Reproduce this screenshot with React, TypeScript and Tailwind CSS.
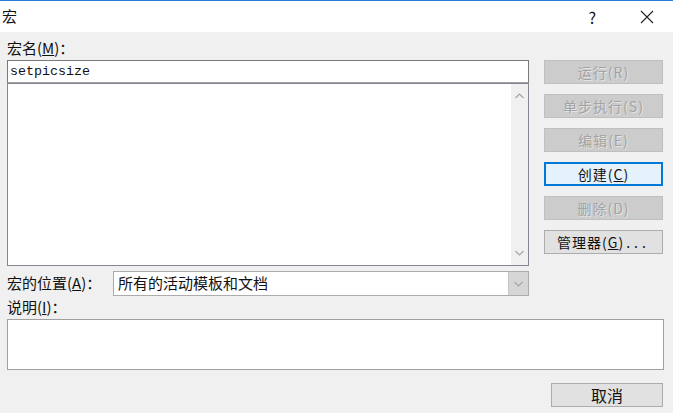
const cjk = { fontFamily: '"Noto Sans CJK SC", "Noto Sans", sans-serif' };

function Chevron({ up }: { up?: boolean }) {
  return (
    <svg width="9" height="6" viewBox="0 0 9 6">
      <path
        d={up ? "M0.5 5 L4.5 1 L8.5 5" : "M0.5 1 L4.5 5 L8.5 1"}
        fill="none"
        stroke="#a6a6a6"
        strokeWidth="1.2"
      />
    </svg>
  );
}

function Btn({
  label,
  kind = "disabled",
}: {
  label: React.ReactNode;
  kind?: "disabled" | "default" | "normal";
}) {
  const cls =
    kind === "disabled"
      ? "bg-[#cccccc] border border-[#bfbfbf] text-[#a3a3a3] [text-shadow:1px_1px_0_#e4e4e4]"
      : kind === "default"
      ? "bg-[#e5f1fb] border-2 border-[#0078d7] text-[#111]"
      : "bg-[#e1e1e1] border border-[#adadad] text-[#111]";
  return (
    <div
      className={`h-6 w-[119px] flex items-center justify-center text-[14px] leading-none tracking-[1px] ${cls}`}
      style={cjk}
    >
      {label}
    </div>
  );
}

export default function App() {
  return (
    <div className="w-[673px] h-[413px] bg-[#f0f0f0] flex flex-col overflow-hidden" style={cjk}>
      <div className="h-px bg-[#2a7bd3]" />
      <div className="h-[31px] bg-white flex items-center text-[#111] text-[15px]">
        <span className="ml-[2px]">宏</span>
        <span className="ml-auto mr-[44px] text-[16px]">?</span>
        <svg className="mr-[19px]" width="14" height="14" viewBox="0 0 14 14">
          <path d="M1 1 L13 13 M13 1 L1 13" stroke="#222" strokeWidth="1.1" />
        </svg>
      </div>

      <div className="flex flex-col pl-[7px] pt-[6px]">
        <div className="flex gap-[15px]">
          <div className="w-[522px] flex flex-col">
            <div className="h-[22px] text-[15px] leading-[20px] text-[#111]">
              宏名(<span className="underline">M</span>)：
            </div>
            <div className="h-[23px] bg-white border border-[#7a7a7a] border-b-[#a0a0a0] flex items-center pl-[2px]">
              <span
                className="text-[13.33px] text-[#111]"
                style={{ fontFamily: '"Liberation Mono", monospace' }}
              >
                setpicsize
              </span>
            </div>
            <div className="h-[183px] bg-white border border-[#828790] flex justify-end">
              <div className="w-[17px] bg-[#f0f0f0] flex flex-col items-center justify-between py-[9px]">
                <Chevron up />
                <Chevron />
              </div>
            </div>
          </div>
          <div className="flex flex-col gap-[10px] pt-[22px]">
            <Btn label="运行(R)" />
            <Btn label="单步执行(S)" />
            <Btn label="编辑(E)" />
            <Btn
              kind="default"
              label={
                <>
                  创建(<span className="underline">C</span>)
                </>
              }
            />
            <Btn label="删除(D)" />
            <Btn
              kind="normal"
              label={
                <>
                  管理器(<span className="underline">G</span>)<span className="tracking-[4px] ml-[2px]">...</span>
                </>
              }
            />
          </div>
        </div>

        <div className="flex items-center mt-[5px] h-[25px]">
          <div className="w-[106px] text-[15px] text-[#111]">
            宏的位置(<span className="underline">A</span>)：
          </div>
          <div className="w-[416px] h-[25px] bg-white border border-[#acacac] flex items-center">
            <span className="pl-[4px] text-[15px] text-[#111] flex-1">所有的活动模板和文档</span>
            <div className="w-[20px] h-full bg-[#d6d6d6] border-l border-[#c4c4c4] flex items-center justify-center">
              <Chevron />
            </div>
          </div>
        </div>

        <div className="h-[23px] flex items-center text-[15px] text-[#111]">
          说明(<span className="underline">I</span>)：
        </div>
        <div className="w-[657px] h-[51px] bg-white border border-[#a0a0a0]" />

        <div className="flex justify-end pr-[10px] mt-[13px]">
          <div className="h-6 w-[112px] bg-[#e1e1e1] border border-[#adadad] flex items-center justify-center text-[16px] text-[#111]">
            取消
          </div>
        </div>
      </div>
    </div>
  );
}
